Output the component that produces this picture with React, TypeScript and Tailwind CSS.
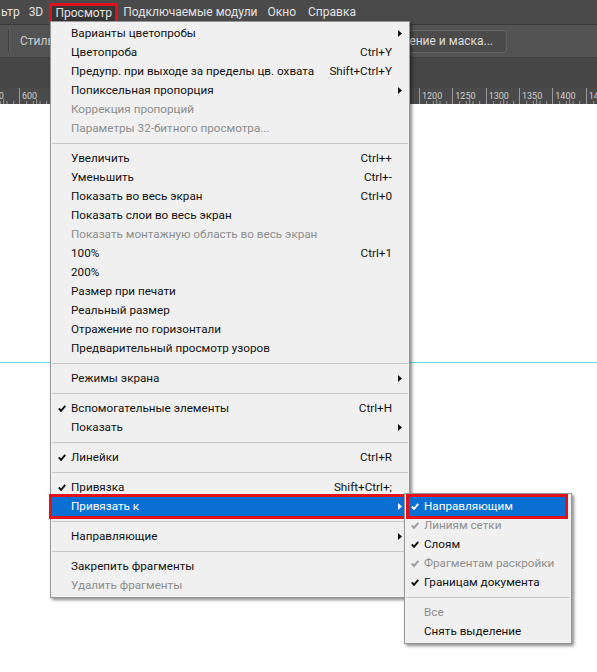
import React from "react";

type Entry =
  | { sep: true }
  | {
      sep?: false;
      label: string;
      shortcut?: string;
      arrow?: boolean;
      disabled?: boolean;
      check?: boolean;
      active?: boolean;
    };

const FONT = { fontFamily: 'Roboto, "Noto Sans", sans-serif' };

const mainItems: Entry[] = [
  { label: "Варианты цветопробы", arrow: true },
  { label: "Цветопроба", shortcut: "Ctrl+Y" },
  { label: "Предупр. при выходе за пределы цв. охвата", shortcut: "Shift+Ctrl+Y" },
  { label: "Попиксельная пропорция", arrow: true },
  { label: "Коррекция пропорций", disabled: true },
  { label: "Параметры 32-битного просмотра...", disabled: true },
  { sep: true },
  { label: "Увеличить", shortcut: "Ctrl++" },
  { label: "Уменьшить", shortcut: "Ctrl+-" },
  { label: "Показать во весь экран", shortcut: "Ctrl+0" },
  { label: "Показать слои во весь экран" },
  { label: "Показать монтажную область во весь экран", disabled: true },
  { label: "100%", shortcut: "Ctrl+1" },
  { label: "200%" },
  { label: "Размер при печати" },
  { label: "Реальный размер" },
  { label: "Отражение по горизонтали" },
  { label: "Предварительный просмотр узоров" },
  { sep: true },
  { label: "Режимы экрана", arrow: true },
  { sep: true },
  { label: "Вспомогательные элементы", shortcut: "Ctrl+H", check: true },
  { label: "Показать", arrow: true },
  { sep: true },
  { label: "Линейки", shortcut: "Ctrl+R", check: true },
  { sep: true },
  { label: "Привязка", shortcut: "Shift+Ctrl+;", check: true },
  { label: "Привязать к", arrow: true, active: true },
  { sep: true },
  { label: "Направляющие", arrow: true },
  { sep: true },
  { label: "Закрепить фрагменты" },
  { label: "Удалить фрагменты", disabled: true },
];

const subItems: Entry[] = [
  { label: "Направляющим", check: true, active: true },
  { label: "Линиям сетки", check: true, disabled: true },
  { label: "Слоям", check: true },
  { label: "Фрагментам раскройки", check: true, disabled: true },
  { label: "Границам документа", check: true },
  { sep: true },
  { label: "Все", disabled: true },
  { label: "Снять выделение" },
];

function Check({ color }: { color: string }) {
  return (
    <svg width="8" height="7" viewBox="0 0 8 7" className="block">
      <path d="M0.8 3.4 L3 5.9 L7.3 0.8" fill="none" stroke={color} strokeWidth="1.9" />
    </svg>
  );
}

function Arrow({ color }: { color: string }) {
  return (
    <svg width="4" height="7" viewBox="0 0 4 7" className="block">
      <polygon points="0,0 4,3.5 0,7" fill={color} />
    </svg>
  );
}

function MenuRow({ e, sub }: { e: Entry; sub?: boolean }) {
  if (e.sep) {
    return (
      <div className="h-[11px] flex items-center px-[1px]">
        <div className="h-px w-full bg-[#c9c9c9]" />
      </div>
    );
  }
  const color = e.active ? "#ffffff" : e.disabled ? "#8d8d8d" : "#111111";
  const checkColor = e.active ? "#ffffff" : e.disabled ? "#9a9a9a" : "#111111";
  const rowMargin = e.active ? (sub ? "ml-[4px] mr-[6px]" : "ml-[1px] mr-[5px]") : "";
  return (
    <div
      className={
        "relative h-[19px] flex items-center text-[11.7px] " +
        rowMargin +
        (e.active ? " bg-[#0a6fd3]" : "")
      }
      style={{ color }}
    >
      {e.active && (
        <div className="absolute -left-[3px] -right-[3px] -top-[3px] -bottom-[3px] border-[3px] border-[#e2121c]" />
      )}
      {e.check && (
        <div className={"absolute top-[6px] " + (sub ? (e.active ? "left-[2px]" : "left-[6px]") : "left-[7px]")}>
          <Check color={checkColor} />
        </div>
      )}
      <span
        className={
          "whitespace-nowrap " +
          (sub ? (e.active ? "pl-[15px]" : "pl-[19px]") : e.active ? "pl-[19px]" : "pl-[20px]")
        }
      >
        {e.label}
      </span>
      <span className="flex-1" />
      {e.shortcut && <span className="whitespace-nowrap pr-[17px]">{e.shortcut}</span>}
      {e.arrow && (
        <div className={"absolute top-[6px] " + (e.active ? "right-[2px]" : "right-[7px]")}>
          <Arrow color={e.active ? "#ffffff" : "#111111"} />
        </div>
      )}
    </div>
  );
}

function RulerSegment({ value }: { value: number }) {
  return (
    <div className="relative w-[33.333px] h-full shrink-0 border-l border-[#9a9a9a]">
      <span className="absolute left-[2px] top-[3px] text-[9px] leading-[10px] text-[#cfcfcf]">
        {value}
      </span>
      <svg width="34" height="16" viewBox="0 0 34 16" className="absolute left-0 top-0">
        <line x1="6.67" y1="13" x2="6.67" y2="16" stroke="#9a9a9a" strokeWidth="1" />
        <line x1="13.33" y1="13" x2="13.33" y2="16" stroke="#9a9a9a" strokeWidth="1" />
        <line x1="16.67" y1="11" x2="16.67" y2="16" stroke="#9a9a9a" strokeWidth="1" />
        <line x1="20" y1="13" x2="20" y2="16" stroke="#9a9a9a" strokeWidth="1" />
        <line x1="26.67" y1="13" x2="26.67" y2="16" stroke="#9a9a9a" strokeWidth="1" />
      </svg>
    </div>
  );
}

export default function App() {
  const leftValues = [550, 600];
  const rightValues = [1200, 1250, 1300, 1350, 1400, 1450];
  return (
    <div className="relative w-[597px] h-[672px] overflow-hidden bg-white" style={FONT}>
      <div className="flex flex-col h-full">
        {/* menu bar */}
        <div className="h-[24px] bg-[#4a4a4a] flex items-center text-[12px] text-[#e2e2e2] shrink-0">
          <span className="ml-[1px]">ьтр</span>
          <span className="ml-[9px]">3D</span>
          <div className="ml-[6px] h-[21px] mt-[2px] w-[69px] border-[3px] border-[#dc131c] bg-[#363636] flex items-center justify-center">
            Просмотр
          </div>
          <span className="ml-[5px]">Подключаемые модули</span>
          <span className="ml-[10px]">Окно</span>
          <span className="ml-[12px]">Справка</span>
        </div>
        <div className="h-px bg-[#3a3a3a] shrink-0" />
        {/* options bar */}
        <div className="h-[32px] bg-[#535353] flex items-center shrink-0">
          <div className="ml-[8px] w-px h-[22px] bg-[#3d3d3d]" />
          <div className="w-px h-[22px] bg-[#626262]" />
          <span className="ml-[10px] text-[12px] text-[#cdcdcd]">Стиль:</span>
          <div className="flex-1" />
          <div className="mr-[90px] w-[130px] h-[23px] rounded-[3px] border border-[#666666] bg-[#4b4b4b] flex items-center justify-end pr-[13px] text-[12px] text-[#dedede] whitespace-nowrap">
            Выделение и маска...
          </div>
        </div>
        <div className="h-px bg-[#3f3f3f] shrink-0" />
        {/* tab area */}
        <div className="h-[30px] bg-[#464646] shrink-0" />
        {/* ruler */}
        <div className="h-[16px] bg-[#4a4a4a] flex overflow-hidden shrink-0">
          <div className="flex ml-[-14.33px] h-full">
            {leftValues.map((v) => (
              <RulerSegment key={v} value={v} />
            ))}
            <div className="w-[366.67px] shrink-0 border-l border-[#9a9a9a]" />
            {rightValues.map((v) => (
              <RulerSegment key={v} value={v} />
            ))}
          </div>
        </div>
        {/* canvas */}
        <div className="flex-1 bg-white">
          <div className="mt-[258px] h-px bg-[#5fe3ec]" />
        </div>
      </div>

      {/* main dropdown */}
      <div className="absolute left-[50px] top-[21px] w-[360px] bg-[#f0f0f0] border border-[#979797] pt-[2px] pb-[2px] shadow-[2px_2px_3px_rgba(0,0,0,0.45)]">
        {mainItems.map((e, i) => (
          <MenuRow key={i} e={e} />
        ))}
      </div>

      {/* submenu */}
      <div className="absolute left-[404px] top-[493px] w-[168px] bg-[#f0f0f0] border border-[#979797] pt-[3px] pb-[2px] shadow-[2px_2px_3px_rgba(0,0,0,0.45)]">
        {subItems.map((e, i) => (
          <MenuRow key={i} e={e} sub />
        ))}
      </div>
    </div>
  );
}
